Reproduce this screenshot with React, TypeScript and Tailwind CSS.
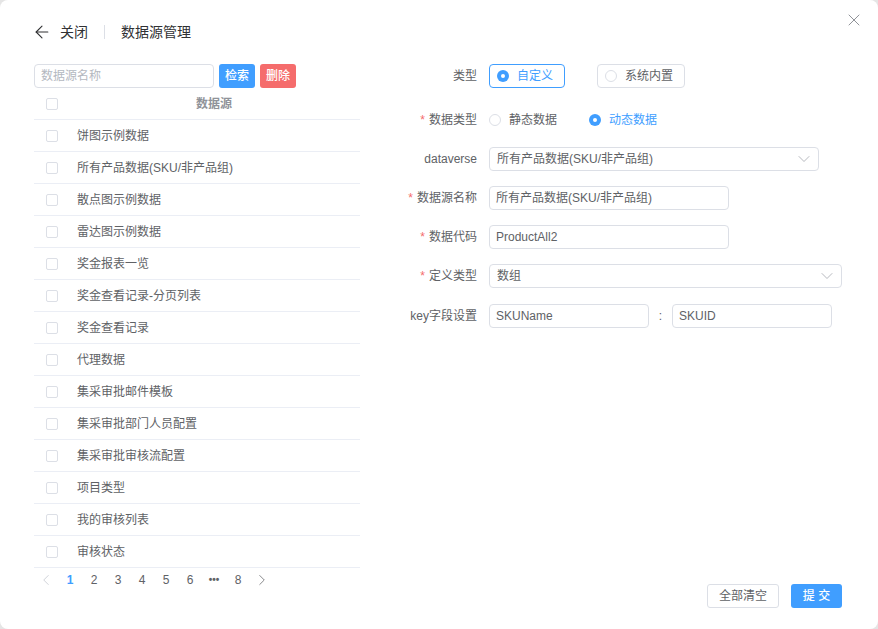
import React from 'react';
import { ArrowLeft, ChevronDown, ChevronLeft, ChevronRight, X } from 'lucide-react';

const rows = [
	'饼图示例数据',
	'所有产品数据(SKU/非产品组)',
	'散点图示例数据',
	'雷达图示例数据',
	'奖金报表一览',
	'奖金查看记录-分页列表',
	'奖金查看记录',
	'代理数据',
	'集采审批邮件模板',
	'集采审批部门人员配置',
	'集采审批审核流配置',
	'项目类型',
	'我的审核列表',
	'审核状态',
];

const Checkbox = () => (
	<span className="block w-3 h-3 border border-[#dcdfe6] rounded-[2px] bg-white" />
);

const Radio = ({ on }: { on?: boolean }) =>
	on ? (
		<span className="flex items-center justify-center w-3 h-3 rounded-full bg-[#409eff]">
			<span className="w-1 h-1 rounded-full bg-white" />
		</span>
	) : (
		<span className="block w-3 h-3 rounded-full border border-[#dcdfe6] bg-white" />
	);

const Label = ({ text, required }: { text: string; required?: boolean }) => (
	<label className="w-[78px] shrink-0 text-right">
		{required && <span className="text-[#f56c6c] mr-1">*</span>}
		{text}
	</label>
);

const Field = ({ value, width }: { value: string; width: string }) => (
	<div className={`${width} h-6 flex items-center px-[6px] border border-[#dcdfe6] rounded-[4px] bg-white`}>
		{value}
	</div>
);

const Select = ({ value, width }: { value: string; width: string }) => (
	<div className={`${width} h-6 flex items-center justify-between pl-[7px] pr-[4px] border border-[#dcdfe6] rounded-[4px] bg-white`}>
		<span>{value}</span>
		<ChevronDown size={20} strokeWidth={1} className="text-[#a8abb2]" />
	</div>
);

const App = () => {
	return (
		<div
			className="w-[878px] h-[629px] bg-[#e5e5e5] overflow-hidden text-xs text-[#606266]"
			style={{ fontFamily: '"Liberation Sans", "Noto Sans CJK SC", sans-serif' }}
		>
			<div className="relative w-full h-full bg-white rounded-lg px-[34px] pt-[22px] flex flex-col">
				<button className="absolute top-[10px] right-[14px] text-[#909399]">
					<X size={20} strokeWidth={1.2} />
				</button>

				<header className="flex items-center h-5 text-sm text-[#303133]">
					<ArrowLeft size={20} strokeWidth={1.3} className="-ml-[2px]" />
					<span className="ml-2">关闭</span>
					<span className="w-px h-[14px] bg-[#dcdfe6] mx-4" />
					<span>数据源管理</span>
				</header>

				<div className="flex flex-1 mt-[22px]">
					<section className="w-[326px] shrink-0 flex flex-col">
						<div className="flex items-center gap-[5px] h-6">
							<div className="w-[180px] h-6 flex items-center px-[6px] border border-[#dcdfe6] rounded-[4px] text-[#b4b8bf]">
								数据源名称
							</div>
							<button className="w-9 h-6 rounded-[3px] bg-[#409eff] text-white font-medium">检索</button>
							<button className="w-9 h-6 rounded-[3px] bg-[#f56c6c] text-white font-medium">删除</button>
						</div>

						<div className="flex items-center h-[32px] border-b border-[#ebeef5] pl-3 text-[#909399] font-bold">
							<Checkbox />
							<span className="flex-1 text-center pl-[10px]">数据源</span>
						</div>
						{rows.map(name => (
							<div key={name} className="flex items-center h-[32px] border-b border-[#ebeef5] pl-3">
								<Checkbox />
								<span className="ml-[19px]">{name}</span>
							</div>
						))}

						<nav className="flex items-center h-6">
							<span className="w-6 flex justify-center text-[#c0c4cc]"><ChevronLeft size={18} strokeWidth={1} /></span>
							{['1', '2', '3', '4', '5', '6', '•••', '8'].map((page, i) => (
								<span
									key={page}
									className={`w-6 text-center ${i === 0 ? 'text-[#409eff] font-bold' : ''} ${page === '•••' ? 'text-[10px] font-bold' : ''}`}
								>
									{page}
								</span>
							))}
							<span className="w-6 flex justify-center"><ChevronRight size={18} strokeWidth={1} /></span>
						</nav>
					</section>

					<section className="flex-1 flex flex-col ml-[39px]">
						<div className="flex items-center h-6 gap-3">
							<Label text="类型" />
							<div className="flex items-center gap-2 w-[76px] h-6 px-[7px] border border-[#409eff] rounded-[4px] text-[#409eff]">
								<Radio on />
								<span>自定义</span>
							</div>
							<div className="flex items-center gap-2 w-[88px] h-6 ml-5 px-[7px] border border-[#dcdfe6] rounded-[4px]">
								<Radio />
								<span>系统内置</span>
							</div>
						</div>

						<div className="flex items-center h-6 gap-3 mt-[20px]">
							<Label text="数据类型" required />
							<div className="flex items-center gap-2">
								<Radio />
								<span>静态数据</span>
							</div>
							<div className="flex items-center gap-2 text-[#409eff] ml-[20px]">
								<Radio on />
								<span>动态数据</span>
							</div>
						</div>

						<div className="flex items-center h-6 gap-3 mt-[15px]">
							<Label text="dataverse" />
							<Select value="所有产品数据(SKU/非产品组)" width="w-[330px]" />
						</div>

						<div className="flex items-center h-6 gap-3 mt-[15px]">
							<Label text="数据源名称" required />
							<Field value="所有产品数据(SKU/非产品组)" width="w-[240px]" />
						</div>

						<div className="flex items-center h-6 gap-3 mt-[15px]">
							<Label text="数据代码" required />
							<Field value="ProductAll2" width="w-[240px]" />
						</div>

						<div className="flex items-center h-6 gap-3 mt-[15px]">
							<Label text="定义类型" required />
							<Select value="数组" width="w-[353px]" />
						</div>

						<div className="flex items-center h-6 gap-3 mt-[16px]">
							<Label text="key字段设置" />
							<div className="flex items-center">
								<Field value="SKUName" width="w-[160px]" />
								<span className="w-[23px] text-center">:</span>
								<Field value="SKUID" width="w-[160px]" />
							</div>
						</div>

						<div className="flex justify-end gap-3 mt-auto mb-[21px] mr-[2px]">
							<button className="w-[72px] h-6 border border-[#dcdfe6] rounded-[3px] bg-white">全部清空</button>
							<button className="w-[51px] h-6 rounded-[3px] bg-[#409eff] text-white font-medium">提 交</button>
						</div>
					</section>
				</div>
			</div>
		</div>
	);
};

export default App;
